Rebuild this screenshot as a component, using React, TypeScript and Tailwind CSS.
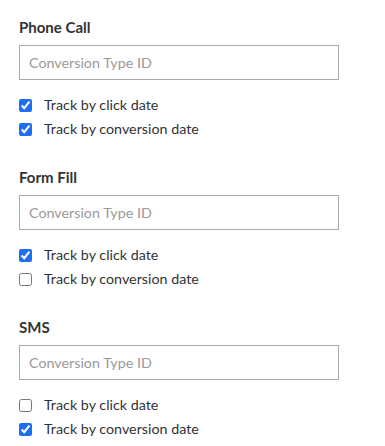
import React from "react";

type Section = {
  title: string;
  click: boolean;
  conversion: boolean;
};

const sections: Section[] = [
  { title: "Phone Call", click: true, conversion: true },
  { title: "Form Fill", click: true, conversion: false },
  { title: "SMS", click: false, conversion: true },
];

function CheckRow({ label, checked }: { label: string; checked: boolean }) {
  return (
    <label className="flex h-6 items-center gap-3">
      <input
        type="checkbox"
        defaultChecked={checked}
        className="m-0 h-[13px] w-[13px] accent-[#1d6ff2]"
      />
      <span className="text-[14.3px] text-[#333333]">{label}</span>
    </label>
  );
}

export default function App() {
  return (
    <div
      className="min-h-screen bg-white px-[19px] pt-[17px]"
      style={{ fontFamily: "Lato, 'Open Sans', sans-serif" }}
    >
      {sections.map((s) => (
        <div key={s.title} className="mb-[26px]">
          <h3 className="text-[15px] font-bold leading-5 text-[#333333]">{s.title}</h3>
          <input
            type="text"
            placeholder="Conversion Type ID"
            className="mt-2 h-[35px] w-[320px] border border-[#aaaaaa] px-[9px] text-[14.3px] text-[#333333] outline-none placeholder:text-[#9a9a9a]"
          />
          <div className="mt-[13px] flex flex-col">
            <CheckRow label="Track by click date" checked={s.click} />
            <CheckRow label="Track by conversion date" checked={s.conversion} />
          </div>
        </div>
      ))}
    </div>
  );
}
